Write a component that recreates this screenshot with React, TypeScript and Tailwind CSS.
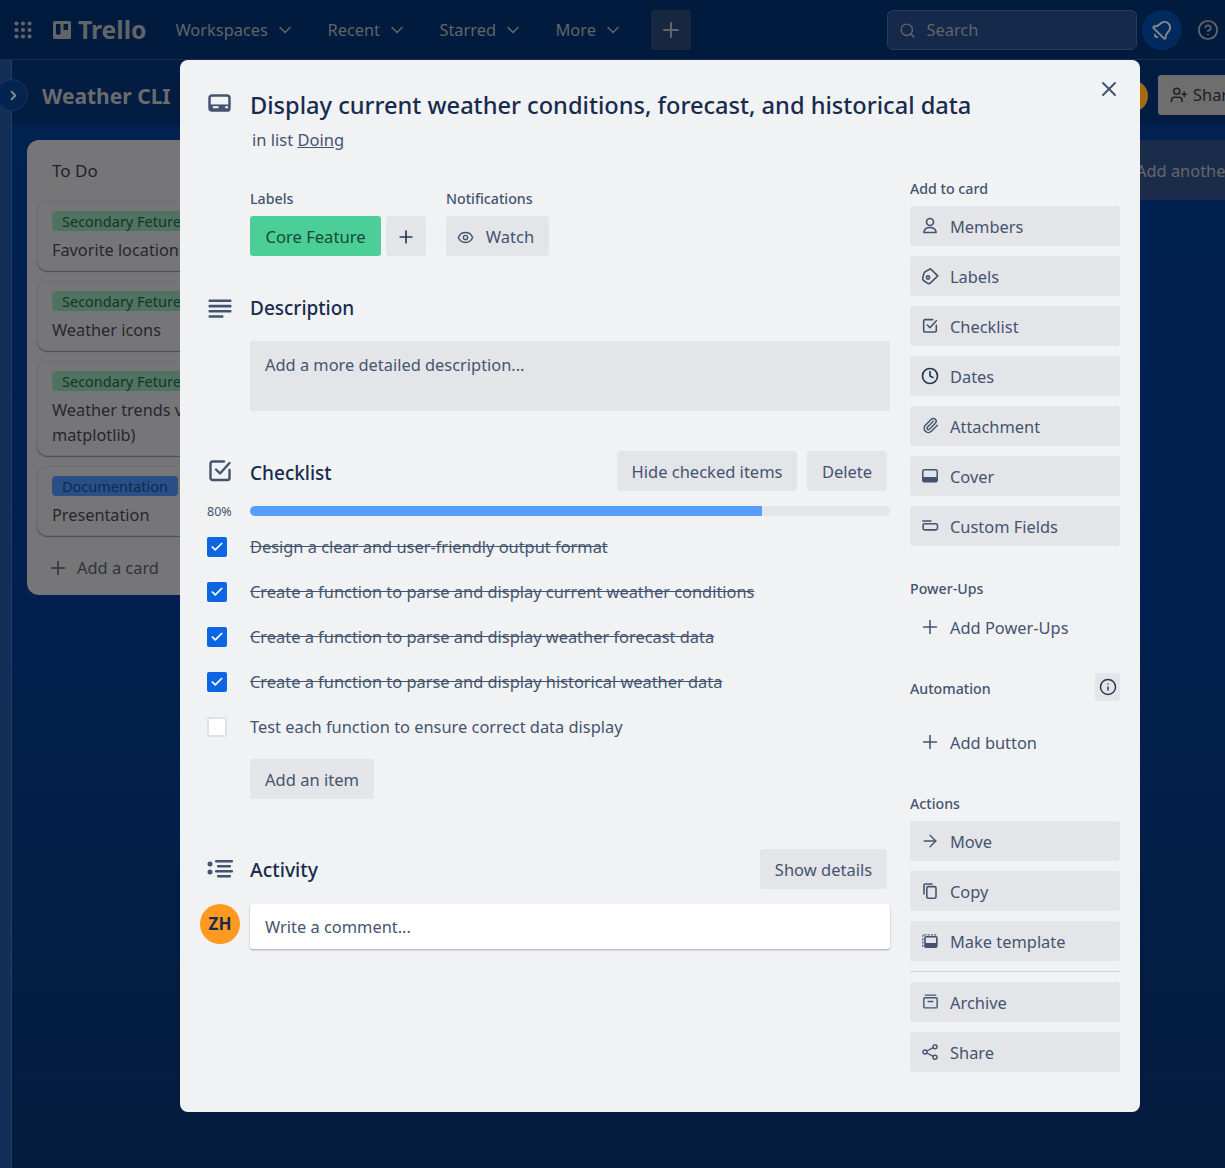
import React from "react";
import { ChevronDown, ChevronRight, Search, Plus, X, Eye, Clock, Paperclip, ArrowRight, Info, Check, CircleHelp, UserPlus, Bell } from "lucide-react";

const CardIcon = ({ className = "" }: { className?: string }) => (
  <svg viewBox="0 0 24 20" className={className} fill="none">
    <rect x="1.5" y="1.5" width="21" height="16" rx="2.5" stroke="currentColor" strokeWidth="2.6" />
    <rect x="1.5" y="11" width="21" height="6.5" fill="currentColor" />
    <rect x="5" y="12.8" width="6" height="2.2" fill="#f1f2f4" />
    <rect x="18" y="12.8" width="3" height="2.2" fill="#f1f2f4" />
  </svg>
);
const DescIcon = () => (
  <svg viewBox="0 0 24 19" className="w-[24px] h-[19px]" fill="currentColor">
    <rect x="0.5" y="0.5" width="23" height="2.6" rx="1" />
    <rect x="0.5" y="5.8" width="23" height="2.6" rx="1" />
    <rect x="0.5" y="11" width="23" height="2.6" rx="1" />
    <rect x="0.5" y="16.2" width="15" height="2.6" rx="1" />
  </svg>
);
const CheckSquare = ({ className = "" }: { className?: string }) => (
  <svg viewBox="0 0 24 24" className={className} fill="none" stroke="currentColor" strokeWidth="2.4" strokeLinecap="round" strokeLinejoin="round">
    <path d="M21.500 11v8a2 2 0 0 1-2 2H4.500a2 2 0 0 1-2-2V4.500a2 2 0 0 1 2-2h11.500" />
    <path d="M8 10.500l4 4 9.500-10.500" />
  </svg>
);
const ActivityIcon = () => (
  <svg viewBox="0 0 26 20" className="w-[26px] h-[20px]" fill="currentColor">
    <circle cx="3" cy="5" r="2.500" />
    <circle cx="3" cy="13" r="2.500" />
    <rect x="8" y="1" width="18" height="2.400" rx="1" />
    <rect x="10" y="6" width="14" height="2.400" rx="1" />
    <rect x="8" y="11" width="18" height="2.400" rx="1" />
    <rect x="10" y="16" width="14" height="2.400" rx="1" />
  </svg>
);
const PersonIcon = () => (
  <svg viewBox="0 0 18 18" className="w-[18px] h-[18px]" fill="none" stroke="currentColor" strokeWidth="1.700" strokeLinejoin="round">
    <circle cx="9" cy="5" r="3.500" />
    <path d="M3 15.500c0-.4 0-1 .3-1.800.7-2.200 2.700-3.200 5.700-3.200s5 1 5.700 3.200c.3.800.3 1.400.3 1.800Z" />
  </svg>
);
const TagIcon = () => (
  <svg viewBox="0 0 18 18" className="w-[18px] h-[18px]" fill="none" stroke="currentColor" strokeWidth="1.600" strokeLinejoin="round">
    <path d="M9.500 1.800 16.800 8.800 9 16.300Q8 17 6.800 16.300L2.500 13.500Q1.300 12.700 1.700 11.200L3 6.200Q3.300 5 4.500 4.500Z" />
    <circle cx="7" cy="10.500" r="1.600" />
  </svg>
);
const CopyIcon = () => (
  <svg viewBox="0 0 14 16" className="w-[14px] h-[16px]" fill="none" stroke="currentColor" strokeWidth="1.600" strokeLinecap="round">
    <path d="M1 11V2a1 1 0 0 1 1-1h7" />
    <rect x="3.800" y="3.600" width="9.200" height="11.600" rx="1.400" />
  </svg>
);
const CoverIcon = () => (
  <svg viewBox="0 0 16 14" className="w-[16px] h-[14px]" fill="currentColor">
    <rect x="0.800" y="0.800" width="14.400" height="12" rx="1.500" fill="none" stroke="currentColor" strokeWidth="1.500" />
    <rect x="0.800" y="8" width="14.400" height="5" rx="1" />
  </svg>
);
const FieldsIcon = () => (
  <svg viewBox="0 0 18 12" className="w-[17px] h-[11px]" fill="none" stroke="currentColor">
    <path d="M0.500 1h9" strokeWidth="1.600" strokeLinecap="round" />
    <rect x="0.900" y="4" width="15.700" height="6.800" rx="1.800" strokeWidth="1.700" />
  </svg>
);
const TemplateIcon = () => (
  <svg viewBox="0 0 16 14" className="w-[16px] h-[14px]" fill="none" stroke="currentColor">
    <rect x="0.800" y="0.800" width="13.800" height="12.400" rx="1.500" strokeWidth="1.300" strokeDasharray="2 1.300" />
    <rect x="3" y="2.800" width="11.800" height="10.400" rx="1.200" fill="#e4e5e9" strokeWidth="1.600" />
    <rect x="3" y="9" width="11.800" height="4" fill="currentColor" strokeWidth="0" />
  </svg>
);
const ArchiveIcon = () => (
  <svg viewBox="0 0 16 16" className="w-[15px] h-[15px]" fill="none" stroke="currentColor" strokeWidth="1.500" strokeLinecap="round">
    <path d="M2.500 1.200h11" />
    <rect x="0.900" y="4" width="14.200" height="10.800" rx="1" />
    <path d="M5.500 8h5" />
  </svg>
);
const ShareIcon = () => (
  <svg viewBox="0 0 16 16" className="w-[16px] h-[16px]" fill="none" stroke="currentColor" strokeWidth="1.400">
    <circle cx="3" cy="8" r="2" />
    <circle cx="13" cy="2.800" r="2" />
    <circle cx="13" cy="13.200" r="2" />
    <path d="M4.900 7 11.200 3.700M4.900 9l6.300 3.300" />
  </svg>
);
const AppGrid = () => (
  <svg viewBox="0 0 18 18" className="w-[18px] h-[18px]" fill="currentColor">
    {[2.5, 9, 15.5].flatMap((y) => [2.5, 9, 15.5].map((x) => <circle key={`${x}-${y}`} cx={x} cy={y} r="2.100" />))}
  </svg>
);
const Logo = () => (
  <svg viewBox="0 0 20 20" className="w-[20px] h-[20px]">
    <path fillRule="evenodd" fill="currentColor" d="M2.500 1h15A1.500 1.500 0 0 1 19 2.500v15a1.500 1.500 0 0 1-1.500 1.500h-15A1.500 1.500 0 0 1 1 17.500v-15A1.500 1.500 0 0 1 2.500 1ZM4 4v10.500h4.500V4Zm7.500 0v6H16V4Z" />
  </svg>
);

const Side = ({ icon, label, plain = false, dark = false }: { icon: React.ReactNode; label: string; plain?: boolean; dark?: boolean }) => (
  <div className={`flex items-center h-10 rounded-[3px] ${plain ? "" : "bg-[#e4e5e9]"}`}>
    <span className={`w-10 h-10 flex items-center justify-center pb-px ${dark ? "text-[#253858]" : "text-[#44546f]"}`}>{icon}</span>
    <span className="text-[#44546f] text-[16.4px] leading-5 pt-[2px]">{label}</span>
  </div>
);

const SectionLabel = ({ children, className = "" }: { children: React.ReactNode; className?: string }) => (
  <div className={`text-[14.2px] leading-5 font-medium text-[#44546f] ${className}`}>{children}</div>
);

const Btn = ({ children, className = "" }: { children: React.ReactNode; className?: string }) => (
  <div className={`h-10 rounded-[3px] bg-[#e4e5e9] flex items-center justify-center text-[#44546f] text-[16.5px] pt-[2px] ${className}`}>{children}</div>
);

const BoardCard = ({ tag, tagClass, lines }: { tag: string; tagClass: string; lines: string[] }) => (
  <div className="rounded-[10px] bg-[#767678] border border-[#6e6e70] shadow-[0_1px_1px_#4e4f53] px-[14px] pt-[9px] pb-[7px]">
    <div className={`h-5 w-fit rounded-[4px] px-[10px] text-[14.5px] leading-5 whitespace-nowrap ${tagClass}`}>{tag}</div>
    <div className="mt-[7px]">
      {lines.map((l) => (
        <div key={l} className="text-[16.3px] leading-[25px] text-[#25272e] whitespace-nowrap">{l}</div>
      ))}
    </div>
  </div>
);

const items: [string, boolean][] = [
  ["Design a clear and user-friendly output format", true],
  ["Create a function to parse and display current weather conditions", true],
  ["Create a function to parse and display weather forecast data", true],
  ["Create a function to parse and display historical weather data", true],
  ["Test each function to ensure correct data display", false],
];

export default function App() {
  return (
    <div className="relative w-[1225px] h-[1168px] overflow-hidden bg-[#021c42] font-['Noto_Sans','Liberation_Sans',sans-serif]">
      {/* Top bar */}
      <header className="h-[60px] pt-[1px] bg-[#011b3e] border-b border-[#1a2c49] flex items-center text-[#626468]">
        <div className="ml-[14px]"><AppGrid /></div>
        <div className="ml-[20px] flex items-center"><Logo /><span className="ml-[6px] text-[24.7px] font-bold leading-none">Trello</span></div>
        <div className="ml-[29px] flex items-center gap-[5px] w-[152px] text-[16.4px]">Workspaces <ChevronDown size={20} className="ml-[2px]" /></div>
        <div className="flex items-center gap-[5px] w-[112px] text-[16.4px]">Recent <ChevronDown size={20} className="ml-[2px]" /></div>
        <div className="flex items-center gap-[5px] w-[116px] text-[16.4px]">Starred <ChevronDown size={20} className="ml-[2px]" /></div>
        <div className="flex items-center gap-[5px] w-[96px] text-[16.4px]">More <ChevronDown size={20} className="ml-[2px]" /></div>
        <div className="w-10 h-10 rounded-[3px] bg-[#17273f] flex items-center justify-center"><Plus size={24} /></div>
        <div className="ml-[196px] w-[250px] h-10 rounded-[6px] bg-[#15294a] border border-[#2a3b57] flex items-center pl-[11px] text-[16.4px]">
          <Search size={17} className="mr-[10px]" /> Search
        </div>
        <div className="ml-[5px] w-10 h-10 rounded-full bg-[#012b5f] flex items-center justify-center text-[#8a8a88]"><Bell size={22} className="rotate-45" /></div>
        <CircleHelp size={22} className="ml-[15px]" />
      </header>

      <div className="flex h-[1108px]">
        {/* Collapsed sidebar */}
        <div className="w-[12px] bg-[#142f57] border-r border-[#233c62] shrink-0" />
        <div className="flex-1 min-w-0 flex flex-col bg-gradient-to-b from-[#012252] via-[#02204f] to-[#041c3d]">
          {/* Board header */}
          <div className="h-[65px] bg-[#021c42] flex items-center pl-[30px] pt-[5px] shrink-0">
            <span className="mt-[2px] text-[21px] font-bold text-[#6a6b6d] leading-none">Weather CLI</span>
            <div className="ml-auto flex items-center">
              <div className="h-10 rounded-[3px] bg-[#6e6e6e] flex items-center pl-[12px] text-[#1f2024] text-[16.4px] w-[100px] translate-x-[33px] whitespace-nowrap"><UserPlus size={18} className="mr-[5px]" />Share</div>
            </div>
          </div>
          {/* Lists */}
          <div className="flex items-start pt-[15px] pl-[15px] gap-[10px]">
            <div className="w-[300px] h-[455px] rounded-[12px] bg-[#767678] px-[10px] shrink-0">
              <div className="pl-[15px] pt-[19px] h-[61px] text-[17px] leading-6 text-[#20222a]">To Do</div>
              <div className="flex flex-col gap-[10px]">
                <BoardCard tag="Secondary Feture" tagClass="bg-[#507361] text-[#173527]" lines={["Favorite locations"]} />
                <BoardCard tag="Secondary Feture" tagClass="bg-[#507361] text-[#173527]" lines={["Weather icons"]} />
                <BoardCard tag="Secondary Feture" tagClass="bg-[#507361] text-[#173527]" lines={["Weather trends visualization", "matplotlib)"]} />
                <BoardCard tag="Documentation" tagClass="bg-[#2a4f86] text-[#0f2a55]" lines={["Presentation"]} />
              </div>
              <div className="flex items-center mt-[20px] pl-[10px] text-[16.4px] text-[#303238]"><Plus size={22} strokeWidth={1.7} className="mr-[8px]" />Add a card</div>
            </div>
            <div className="ml-[786px] w-[300px] h-[60px] rounded-[12px] bg-[#1a2c49] flex items-center pl-[13px] pt-[2px] text-[16.4px] text-[#666769] whitespace-nowrap shrink-0">Add another list</div>
          </div>
        </div>
      </div>

      {/* Sidebar toggle */}
      <div className="absolute left-[-4px] top-[79px] w-8 h-8 rounded-full bg-[#04234f] border border-[#17345e] flex items-center justify-center text-[#85898f] pl-[2px]"><ChevronRight size={15} strokeWidth={3} /></div>
      {/* member avatar */}
      <div className="absolute left-[1116px] top-[80px] w-8 h-8 rounded-full bg-[#a76a10]" />

      {/* Modal */}
      <div className="absolute left-[180px] top-[60px] w-[960px] h-[1052px] rounded-[8px] bg-[#f1f2f4]">
        <button className="absolute right-[19px] top-[17px] text-[#44546f]"><X size={24} strokeWidth={2} /></button>

        {/* title */}
        <div className="flex pl-[28px] pt-[29px]">
          <div className="w-[42px] pt-[5px] text-[#44546f]"><CardIcon className="w-[23px] h-[19px]" /></div>
          <div>
            <h1 className="text-[23.6px] leading-[33px] font-medium text-[#172b4d] whitespace-nowrap">Display current weather conditions, forecast, and historical data</h1>
            <p className="ml-[2px] mt-[6px] h-[24px] text-[16.5px] leading-[24px] text-[#44546f]">in list <span className="underline">Doing</span></p>
          </div>
        </div>

        <div className="flex mt-[36px]">
          {/* Main */}
          <div className="ml-[20px] w-[690px]">
            <div className="ml-[50px] mt-[1px] flex gap-[20px]">
              <div>
                <SectionLabel>Labels</SectionLabel>
                <div className="flex gap-[5px] mt-[7px]">
                  <div className="h-10 w-[131px] rounded-[3px] bg-[#4bce97] flex items-center justify-center pt-[2px] text-[16.6px] text-[#164b35]">Core Feature</div>
                  <Btn className="w-10"><Plus size={20} className="text-[#253858]" /></Btn>
                </div>
              </div>
              <div>
                <SectionLabel>Notifications</SectionLabel>
                <Btn className="w-[103px] mt-[7px] pr-[4px]"><Eye size={17} className="mr-[12px]" />Watch</Btn>
              </div>
            </div>

            {/* Description */}
            <div className="mt-[35px] flex items-center h-[34px]">
              <div className="w-[50px] pl-[8px] text-[#44546f]"><DescIcon /></div>
              <h2 className="text-[19px] leading-7 font-medium text-[#172b4d]">Description</h2>
            </div>
            <div className="ml-[50px] mt-[16px] w-[640px] h-[70px] rounded-[3px] bg-[#e4e5e9] px-[15px] py-[12px] text-[16.4px] leading-6 text-[#44546f]">Add a more detailed description...</div>

            {/* Checklist */}
            <div className="mt-[40px] flex items-center h-10">
              <div className="w-[50px] pl-[8px] text-[#44546f]"><CheckSquare className="w-6 h-6" /></div>
              <h2 className="text-[19px] leading-7 font-medium text-[#172b4d] pt-[4px]">Checklist</h2>
              <Btn className="ml-auto w-[180px]">Hide checked items</Btn>
              <Btn className="ml-[10px] mr-[3px] w-[80px]">Delete</Btn>
            </div>
            <div className="mt-[15px] flex items-center h-[10px]">
              <div className="w-[50px] pl-[7px] text-[12.5px] leading-none text-[#44546f] pt-[3px]">80%</div>
              <div className="w-[640px] h-[10px] rounded-[5px] bg-[#e4e5e9] overflow-hidden">
                <div className="w-[80%] h-full bg-[#579dff]" />
              </div>
            </div>
            <div className="mt-[8px]">
              {items.map(([t, done]) => (
                <div key={t} className="flex items-center h-[45px]">
                  <div className="w-[50px] pl-[7px]">
                    {done ? (
                      <div className="w-5 h-5 rounded-[2px] bg-[#0c66e4] flex items-center justify-center text-white"><Check size={14} strokeWidth={3} /></div>
                    ) : (
                      <div className="w-5 h-5 rounded-[2px] bg-white border-2 border-[#dfe1e6]" />
                    )}
                  </div>
                  <span className={`text-[16.4px] pt-[2px] ${done ? "line-through text-[#44546f]" : "text-[#44546f]"}`}>{t}</span>
                </div>
              ))}
            </div>
            <Btn className="ml-[50px] mt-[10px] w-[124px]">Add an item</Btn>

            {/* Activity */}
            <div className="mt-[50px] flex items-center h-10">
              <div className="w-[50px] pl-[7px] text-[#44546f]"><ActivityIcon /></div>
              <h2 className="text-[19.4px] leading-7 font-medium text-[#172b4d] pt-[2px]">Activity</h2>
              <Btn className="ml-auto mr-[3px] w-[127px]">Show details</Btn>
            </div>
            <div className="mt-[15px] flex">
              <div className="w-10 h-10 rounded-full bg-[#ff991f] flex items-center justify-center text-[17px] font-bold text-[#172b4d]">ZH</div>
              <div className="ml-[10px] w-[640px] h-[45px] rounded-[3px] bg-white shadow-[0_1px_2px_rgba(9,30,66,0.35)] flex items-center pl-[15px] pt-[2px] text-[16.4px] text-[#44546f]">Write a comment...</div>
            </div>
          </div>

          {/* Sidebar */}
          <aside className="ml-[20px] w-[210px] -mt-[4px]">
            <SectionLabel className="-mt-[5px]">Add to card</SectionLabel>
            <div className="mt-[7px] flex flex-col gap-[10px]">
              <Side icon={<PersonIcon />} label="Members" />
              <Side icon={<TagIcon />} label="Labels" />
              <Side icon={<CheckSquare className="w-[16px] h-[16px]" />} label="Checklist" />
              <Side icon={<Clock size={18} strokeWidth={2.2} />} label="Dates" dark />
              <Side icon={<Paperclip size={17} />} label="Attachment" />
              <Side icon={<CoverIcon />} label="Cover" />
              <Side icon={<FieldsIcon />} label="Custom Fields" />
            </div>
            <SectionLabel className="mt-[33px]">Power-Ups</SectionLabel>
            <div className="mt-[8px]"><Side plain icon={<Plus size={22} strokeWidth={1.7} />} label="Add Power-Ups" /></div>
            <div className="mt-[26px] flex items-center justify-between h-7">
              <SectionLabel className="pt-[4px]">Automation</SectionLabel>
              <div className="w-[25px] h-7 rounded-[3px] bg-[#e4e5e9] flex items-center justify-center text-[#253858]"><Info size={18} strokeWidth={2} /></div>
            </div>
            <div className="mt-[21px]"><Side plain icon={<Plus size={22} strokeWidth={1.7} />} label="Add button" /></div>
            <SectionLabel className="mt-[32px]">Actions</SectionLabel>
            <div className="mt-[7px] flex flex-col gap-[10px]">
              <Side icon={<ArrowRight size={20} strokeWidth={1.6} />} label="Move" />
              <Side icon={<CopyIcon />} label="Copy" />
              <Side icon={<TemplateIcon />} label="Make template" />
            </div>
            <div className="h-px bg-[#d3d5d9] mt-[10px] mb-[10px]" />
            <div className="flex flex-col gap-[10px]">
              <Side icon={<ArchiveIcon />} label="Archive" />
              <Side icon={<ShareIcon />} label="Share" />
            </div>
          </aside>
        </div>
      </div>
    </div>
  );
}
